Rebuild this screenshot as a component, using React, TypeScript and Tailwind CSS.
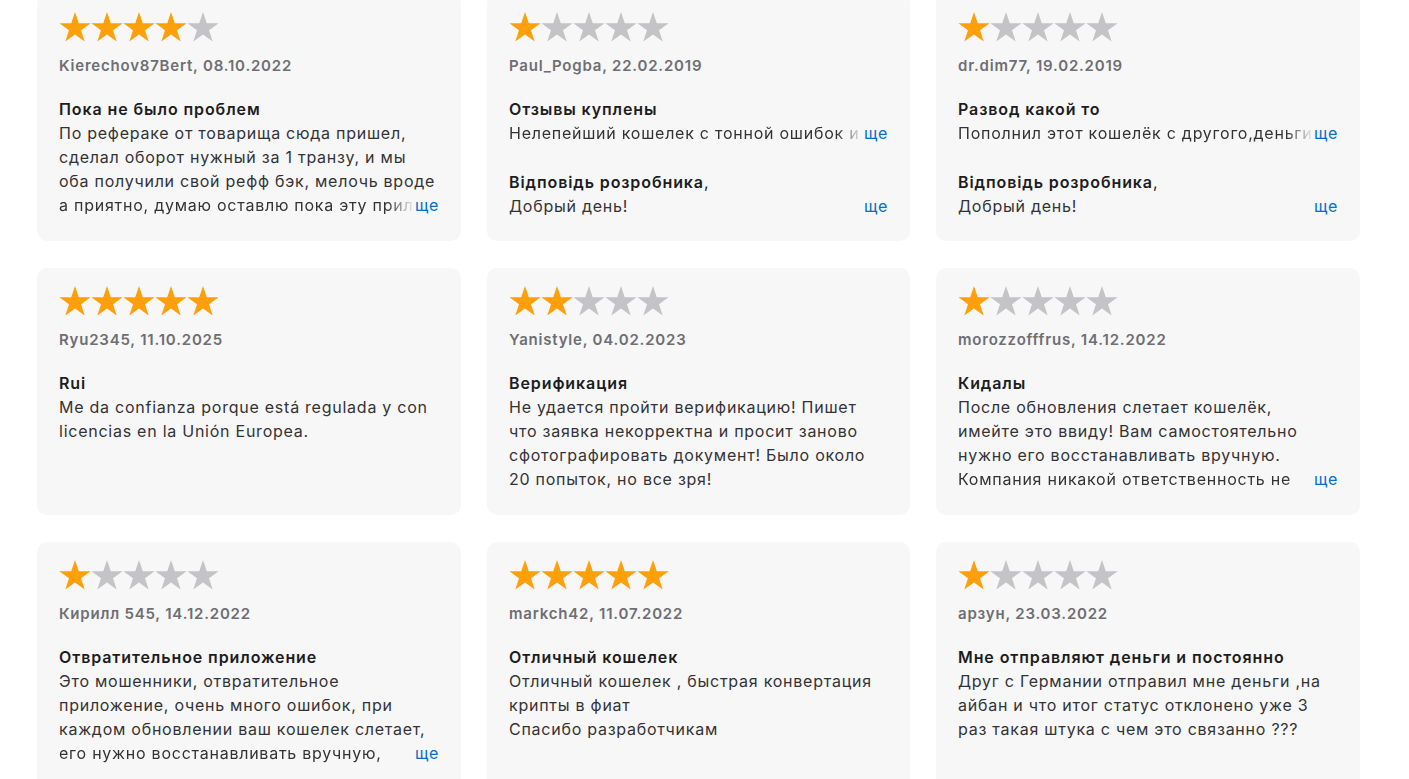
import React from "react";

type Review = {
  rating: number;
  author: string;
  title: string;
  lines: string[];
  more?: boolean;
  reply?: string;
};

const reviews: Review[] = [
  {
    rating: 4,
    author: "Kierechov87Bert, 08.10.2022",
    title: "Пока не было проблем",
    lines: [
      "По рефераке от товарища сюда пришел,",
      "сделал оборот нужный за 1 транзу, и мы",
      "оба получили свой рефф бэк, мелочь вроде",
      "а приятно, думаю оставлю пока эту приложение",
    ],
    more: true,
  },
  {
    rating: 1,
    author: "Paul_Pogba, 22.02.2019",
    title: "Отзывы куплены",
    lines: ["Нелепейший кошелек с тонной ошибок и недоработок"],
    more: true,
    reply: "Добрый день!",
  },
  {
    rating: 1,
    author: "dr.dim77, 19.02.2019",
    title: "Развод какой то",
    lines: ["Пополнил этот кошелёк с другого,деньги не пришли"],
    more: true,
    reply: "Добрый день!",
  },
  {
    rating: 5,
    author: "Ryu2345, 11.10.2025",
    title: "Rui",
    lines: ["Me da confianza porque está regulada y con", "licencias en la Unión Europea."],
  },
  {
    rating: 2,
    author: "Yanistyle, 04.02.2023",
    title: "Верификация",
    lines: [
      "Не удается пройти верификацию! Пишет",
      "что заявка некорректна и просит заново",
      "сфотографировать документ! Было около",
      "20 попыток, но все зря!",
    ],
  },
  {
    rating: 1,
    author: "morozzofffrus, 14.12.2022",
    title: "Кидалы",
    lines: [
      "После обновления слетает кошелёк,",
      "имейте это ввиду! Вам самостоятельно",
      "нужно его восстанавливать вручную.",
      "Компания никакой ответственность не",
    ],
    more: true,
  },
  {
    rating: 1,
    author: "Кирилл 545, 14.12.2022",
    title: "Отвратительное приложение",
    lines: [
      "Это мошенники, отвратительное",
      "приложение, очень много ошибок, при",
      "каждом обновлении ваш кошелек слетает,",
      "его нужно восстанавливать вручную,",
    ],
    more: true,
  },
  {
    rating: 5,
    author: "markch42, 11.07.2022",
    title: "Отличный кошелек",
    lines: ["Отличный кошелек , быстрая конвертация", "крипты в фиат", "Спасибо разработчикам"],
  },
  {
    rating: 1,
    author: "арзун, 23.03.2022",
    title: "Мне отправляют деньги и постоянно",
    lines: [
      "Друг с Германии отправил мне деньги ,на",
      "айбан и что итог статус отклонено уже 3",
      "раз такая штука с чем это связанно ???",
    ],
  },
];

function Star({ on }: { on: boolean }) {
  return (
    <svg width="32" height="32" viewBox="0 0 100 100">
      <polygon
        points="50,3 61.8,38.2 98.9,38.2 68.8,60 80.3,95.1 50,73.5 19.7,95.1 31.2,60 1.1,38.2 38.2,38.2"
        fill={on ? "#ff9f0a" : "#c4c4c6"}
      />
    </svg>
  );
}

// last visible line: text fades out, "ще" link sits at the right edge
function MoreLine({ text }: { text: string }) {
  return (
    <div className="flex">
      <div className="min-w-0 flex-1 overflow-hidden whitespace-nowrap [mask-image:linear-gradient(to_left,transparent,black_28px)]">
        {text}
      </div>
      <span className="shrink-0 text-[#0070c9]">ще</span>
    </div>
  );
}

function Card({ r }: { r: Review }) {
  return (
    <div className="h-[247px] overflow-hidden rounded-[10px] bg-[#f7f7f7] px-[22px] pt-[17px]">
      <div className="flex h-8">
        {[1, 2, 3, 4, 5].map((i) => (
          <Star key={i} on={i <= r.rating} />
        ))}
      </div>
      <div className="mt-[13px] text-[15px] leading-5 font-semibold tracking-[0.8px] text-[#6e6e73]">{r.author}</div>
      <div className="mt-[21px] text-[16px] leading-6 font-semibold tracking-[0.9px] text-[#1d1d1f]">{r.title}</div>
      <div className="text-[16px] leading-6 tracking-[0.75px] text-[#333336]">
        {r.lines.map((l, i) =>
          r.more && i === r.lines.length - 1 ? (
            <MoreLine key={i} text={l} />
          ) : (
            <div key={i} className="whitespace-nowrap">
              {l}
            </div>
          )
        )}
      </div>
      {r.reply && (
        <div className="mt-[25px]">
          <div className="text-[16px] leading-6 font-semibold tracking-[0.9px] text-[#1d1d1f]">
            Відповідь розробника<span className="font-normal">,</span>
          </div>
          <div className="flex justify-between text-[16px] leading-6 tracking-[0.75px] text-[#333336]">
            <span>{r.reply}</span>
            <span className="text-[#0070c9]">ще</span>
          </div>
        </div>
      )}
    </div>
  );
}

export default function App() {
  return (
    <div className="h-[779px] overflow-hidden bg-white font-['Inter','Noto_Sans',sans-serif]">
      <div className="ml-[37px] mt-[-6px] grid w-[1323px] grid-cols-[424px_423px_424px] gap-x-[26px] gap-y-[27px]">
        {reviews.map((r, i) => (
          <Card key={i} r={r} />
        ))}
      </div>
    </div>
  );
}
